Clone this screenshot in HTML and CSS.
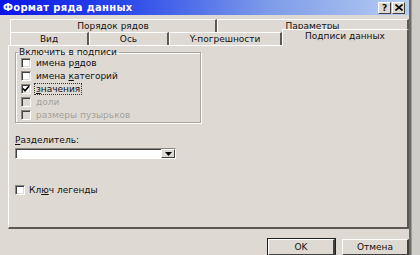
FILE: index.html
```html
<!DOCTYPE html>
<html>
<head>
<meta charset="utf-8">
<link rel="stylesheet" href="styles.css">
</head>
<body>
<div class="dialog">
  <div class="titlebar">
    <span class="title">Формат ряда данных</span>
    <div class="tbtns">
      <span class="tbtn">?</span>
      <span class="tbtn close">
        <svg width="8" height="7" viewBox="0 0 8 7"><path d="M0.5 0.5 L7.5 6.5 M7.5 0.5 L0.5 6.5" stroke="#000" stroke-width="1.6"/></svg>
      </span>
    </div>
  </div>
  <div class="tabs">
    <div class="row row1">
      <div class="tab t-order">Порядок рядов</div>
      <div class="tab t-params">Параметры</div>
    </div>
    <div class="row row2">
      <div class="tab t-view">Вид</div>
      <div class="tab t-axis">Ось</div>
      <div class="tab t-err">Y-погрешности</div>
      <div class="tab t-labels sel">Подписи данных</div>
    </div>
  </div>
  <div class="panel">
    <fieldset class="group">
      <legend>Включить в подписи</legend>
      <div class="cb"><span class="box"></span><span>имена р<u>я</u>дов</span></div>
      <div class="cb"><span class="box"></span><span>имена <u>к</u>атегорий</span></div>
      <div class="cb"><span class="box"><svg width="8" height="8" viewBox="0 0 8 8"><path d="M1 3.5 L3 5.8 L7 1.2" fill="none" stroke="#000" stroke-width="1.6"/></svg></span><span class="focus"><u>з</u>начения</span></div>
      <div class="cb dis"><span class="box"></span><span>доли</span></div>
      <div class="cb dis"><span class="box"></span><span>размеры пузырьков</span></div>
    </fieldset>
    <div class="seplabel"><u>Р</u>азделитель:</div>
    <div class="combo">
      <span class="arrow"><svg width="7" height="4" viewBox="0 0 7 4"><path d="M0 0 H7 L3.5 4 Z" fill="#000"/></svg></span>
    </div>
    <div class="cb legend"><span class="box"></span><span>Кл<u>ю</u>ч легенды</span></div>
  </div>
  <div class="footer">
    <button class="btn ok">OK</button>
    <button class="btn">Отмена</button>
  </div>
</div>
</body>
</html>
```
FILE: styles.css
```css
html, body {
  margin: 0;
  padding: 0;
  background: #cfcdc8;
  width: 420px;
  height: 255px;
  overflow: hidden;
}
.dialog {
  width: 409px;
  height: 262px;
  background: #dedad3;
  border-right: 2px solid #6e6c68;
  box-shadow: 1px 0 0 #a09c96;
  font-family: "DejaVu Sans", sans-serif;
  font-size: 9px;
  color: #111;
  position: relative;
}
.titlebar {
  height: 15px;
  display: flex;
  align-items: center;
  justify-content: space-between;
  background: linear-gradient(to right, #0c14e8 0%, #2a48ea 30%, #7c9ae8 65%, #b6cdf2 100%);
  padding: 0 4px 0 3px;
}
.title {
  color: #fff;
  font-weight: bold;
  font-size: 10px;
  letter-spacing: 0.3px;
}
.tbtns {
  display: flex;
  gap: 1px;
}
.tbtn {
  width: 11px;
  height: 10px;
  background: #dedad3;
  border-top: 1px solid #fff;
  border-left: 1px solid #fff;
  border-right: 1px solid #404040;
  border-bottom: 1px solid #404040;
  font-weight: bold;
  font-size: 9px;
  line-height: 10px;
  text-align: center;
  display: flex;
  align-items: center;
  justify-content: center;
}
.tabs {
  padding: 4px 0 0 10px;
}
.row {
  display: flex;
  height: 13px;
}
.tab {
  box-sizing: border-box;
  height: 13px;
  line-height: 13px;
  text-align: center;
  border-top: 1px solid #fff;
  border-left: 1px solid #fff;
  border-right: 2px solid #5a5854;
  background: #dedad3;
}
.t-order { width: 207px; }
.t-params { width: 192px; }
.row2 {
  align-items: flex-end;
  height: 13px;
}
.t-view { width: 79px; }
.t-axis { width: 80px; }
.t-err { width: 113px; }
.t-labels.sel {
  width: 127px;
  height: 17px;
  margin-top: -3px;
  margin-bottom: -1px;
  line-height: 12px;
  position: relative;
  z-index: 2;
  padding-bottom: 4px;
}
.panel {
  box-sizing: border-box;
  margin-left: 8px;
  width: 401px;
  height: 184px;
  border-top: 1px solid #fff;
  border-left: 1px solid #fff;
  border-right: 2px solid #5a5854;
  border-bottom: 2px solid #5a5854;
  padding: 1px 0 0 6px;
  position: relative;
}
.group {
  margin: 0;
  width: 186px;
  box-sizing: border-box;
  border: 1px solid #a8a49e;
  box-shadow: 1px 1px 0 #fff, inset 1px 1px 0 #fff;
  padding: 0 0 4px 5px;
  height: 76px;
}
.group legend {
  padding: 0 2px 0 1px;
  margin-left: -3px;
  line-height: 10px;
}
.cb {
  display: flex;
  align-items: center;
  gap: 5px;
  height: 12.8px;
}
.box {
  box-sizing: border-box;
  width: 10px;
  height: 10px;
  background: #fff;
  border-top: 1px solid #8c8882;
  border-left: 1px solid #8c8882;
  border-right: 1px solid #fff;
  border-bottom: 1px solid #fff;
  box-shadow: inset 1px 1px 0 #404040, inset -1px -1px 0 #dedad3;
  display: flex;
  align-items: center;
  justify-content: center;
  flex: none;
}
.focus {
  outline: 1px dotted #333;
  outline-offset: 0;
  padding: 0 1px;
  margin-left: -1px;
}
.dis {
  color: #a4a09a;
}
.dis .box {
  background: #dedad3;
}
.seplabel {
  margin-top: 12px;
  line-height: 10px;
}
.combo {
  margin-top: 3px;
  box-sizing: border-box;
  width: 161px;
  height: 11px;
  background: #fff;
  border-top: 1px solid #8c8882;
  border-left: 1px solid #8c8882;
  border-right: 1px solid #fff;
  border-bottom: 1px solid #fff;
  box-shadow: inset 1px 1px 0 #404040;
  display: flex;
  justify-content: flex-end;
}
.arrow {
  box-sizing: border-box;
  width: 14px;
  height: 9px;
  background: #dedad3;
  border-top: 1px solid #fff;
  border-left: 1px solid #fff;
  border-right: 1px solid #404040;
  border-bottom: 1px solid #404040;
  display: flex;
  align-items: center;
  justify-content: center;
}
.legend {
  margin-top: 25px;
  gap: 4px;
}
.footer {
  display: flex;
  justify-content: flex-end;
  gap: 7px;
  padding: 10px 0 0 0;
}
.btn {
  box-sizing: border-box;
  width: 67px;
  height: 17px;
  background: #dedad3;
  font-family: "DejaVu Sans", sans-serif;
  font-size: 9px;
  color: #111;
  border-top: 1px solid #fff;
  border-left: 1px solid #fff;
  border-right: 2px solid #404040;
  border-bottom: 2px solid #404040;
  padding: 0;
}
.btn.ok {
  outline: 1px solid #202020;
}
```
